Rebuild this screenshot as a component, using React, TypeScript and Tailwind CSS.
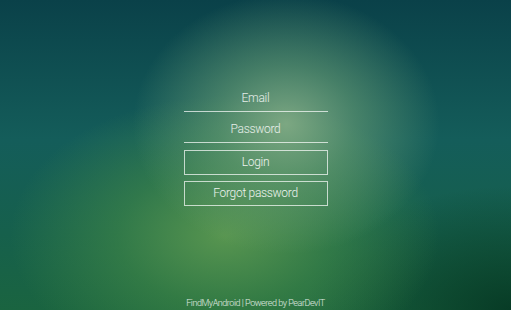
import React from 'react';

const bg =
  'bg-[radial-gradient(ellipse_30%_42%_at_56%_40%,rgba(135,175,135,0.9)_0%,rgba(115,165,120,0.55)_45%,rgba(0,0,0,0)_100%),radial-gradient(ellipse_42%_45%_at_44%_76%,rgba(95,155,80,0.9)_0%,rgba(75,145,70,0.5)_50%,rgba(0,0,0,0)_100%),radial-gradient(ellipse_40%_40%_at_100%_100%,rgba(5,55,35,0.9)_0%,rgba(0,0,0,0)_100%),linear-gradient(to_bottom,#0a4149_0%,#145d5a_45%,#16604c_75%,#1a6440_100%)]';

const App: React.FC = () => {
  return (
    <div
      className={`relative flex h-[310px] w-full flex-col items-center overflow-hidden ${bg} text-white`}
      style={{ fontFamily: '"Helvetica Neue", Roboto, "Liberation Sans", Arial, sans-serif' }}
    >
      {/* Login form */}
      <div className="mt-[85px] flex w-[144px] flex-col">
        <input
          type="email"
          placeholder="Email"
          className="h-[27px] w-full border-b border-white/70 bg-transparent text-center text-[12px] font-light tracking-tight text-white outline-none placeholder:text-white/85"
        />
        <input
          type="password"
          placeholder="Password"
          className="mt-[4px] h-[27px] w-full border-b border-white/70 bg-transparent text-center text-[12px] font-light tracking-tight text-white outline-none placeholder:text-white/85"
        />
        <button className="mt-[7px] h-[25px] w-full border border-white/70 bg-transparent pb-[1px] text-[12px] font-light tracking-tight text-white/90">
          Login
        </button>
        <button className="mt-[6px] h-[25px] w-full border border-white/70 bg-transparent pb-[1px] text-[12px] font-light tracking-tight text-white/90">
          Forgot password
        </button>
      </div>

      {/* Footer */}
      <div className="mt-auto pb-[1px] text-[9px] font-light leading-[12px] tracking-tighter text-white/85">
        FindMyAndroid | Powered by PearDevIT
      </div>
    </div>
  );
};

export default App;
